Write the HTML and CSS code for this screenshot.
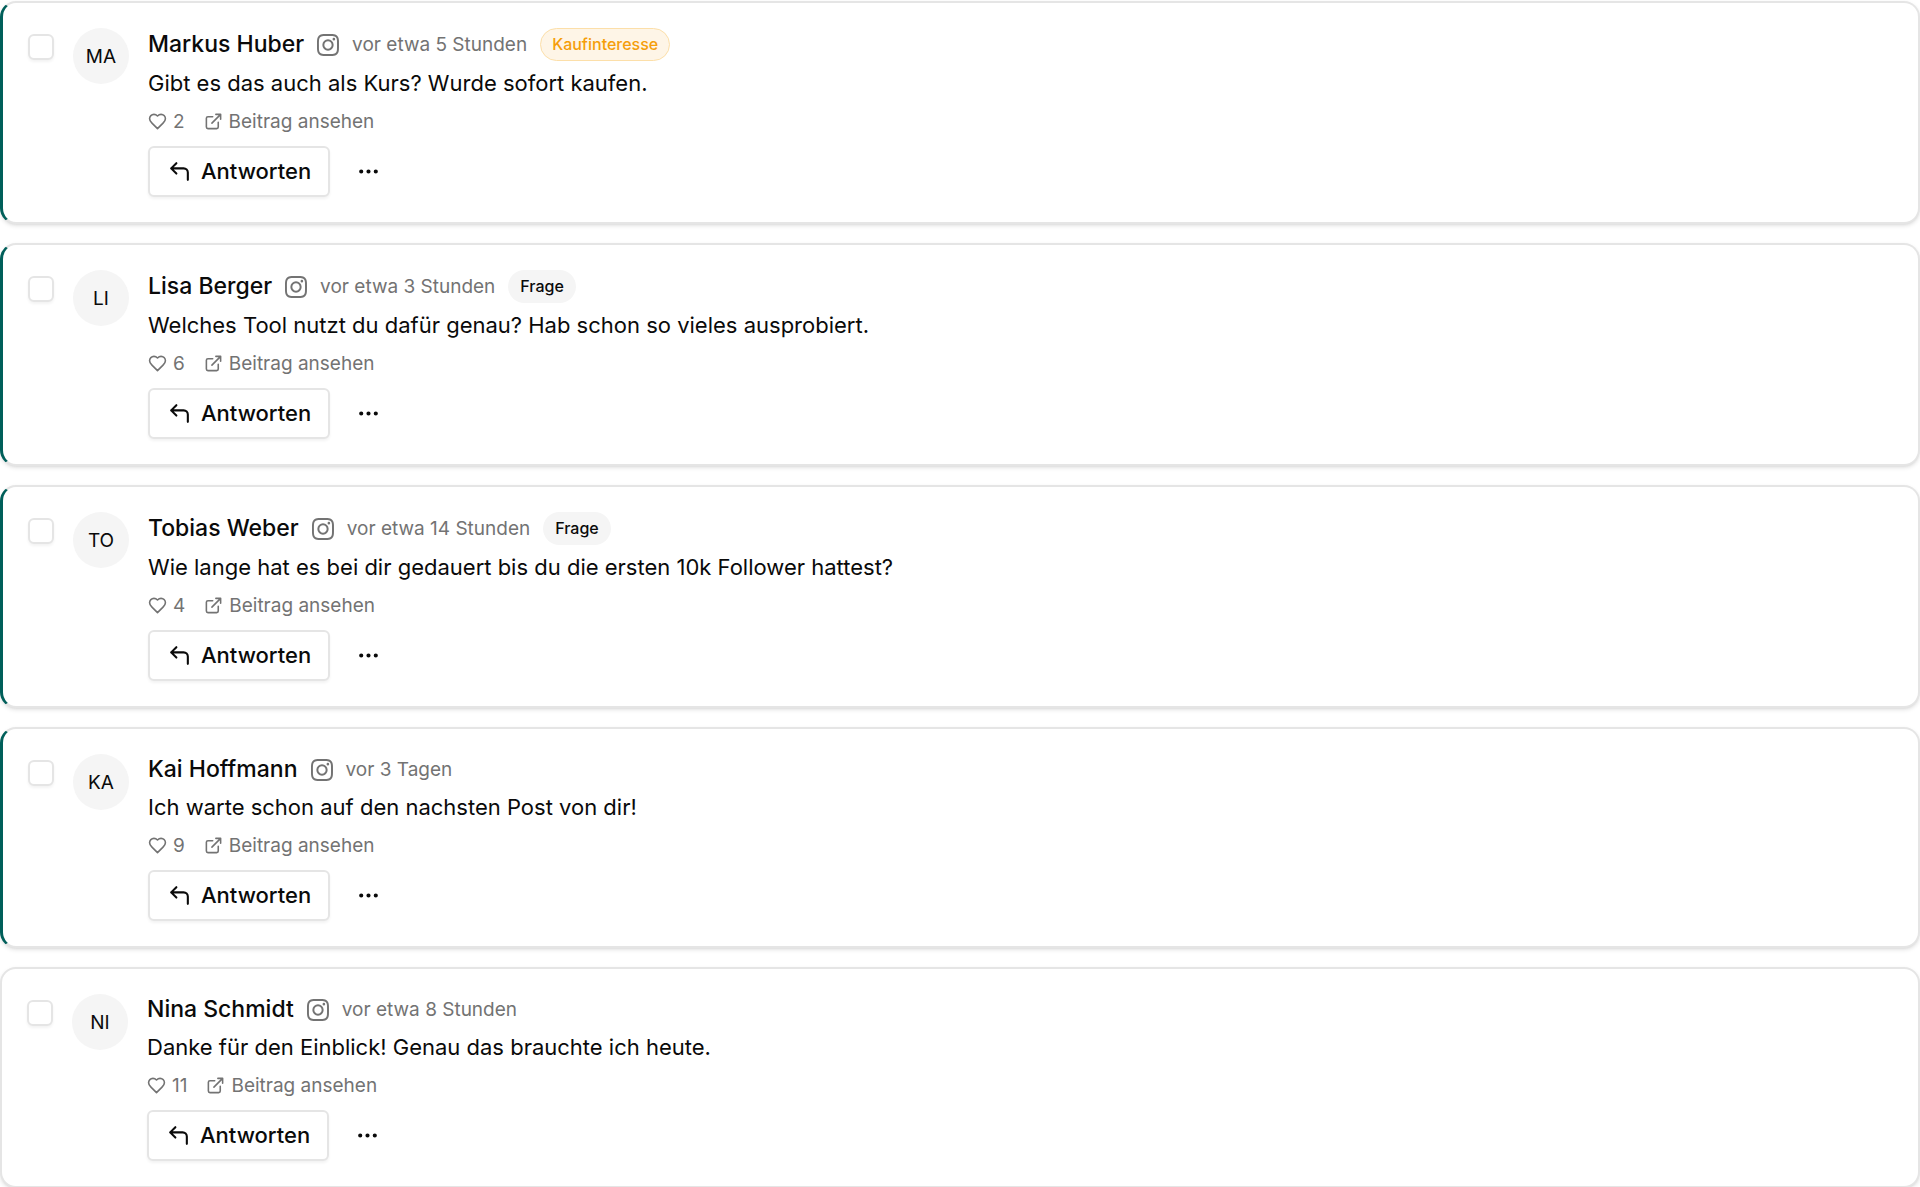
FILE: index.html
```html
<!DOCTYPE html>
<html lang="de">
<head>
<meta charset="utf-8">
<meta name="viewport" content="width=device-width, initial-scale=1">
<title>Kommentare</title>
<link rel="stylesheet" href="styles.css">
</head>
<body>
<svg class="sprite" aria-hidden="true">
  <symbol id="instagram" viewBox="0 0 24 24"><path fill="currentColor" d="M12 0C8.74 0 8.333.015 7.053.072 5.775.132 4.905.333 4.14.63c-.789.306-1.459.717-2.126 1.384S.935 3.35.63 4.14C.333 4.905.131 5.775.072 7.053.012 8.333 0 8.74 0 12s.015 3.667.072 4.947c.06 1.277.261 2.148.558 2.913.306.788.717 1.459 1.384 2.126.667.666 1.336 1.079 2.126 1.384.766.296 1.636.499 2.913.558C8.333 23.988 8.74 24 12 24s3.667-.015 4.947-.072c1.277-.06 2.148-.262 2.913-.558.788-.306 1.459-.718 2.126-1.384.666-.667 1.079-1.335 1.384-2.126.296-.765.499-1.636.558-2.913.06-1.28.072-1.687.072-4.947s-.015-3.667-.072-4.947c-.06-1.277-.262-2.149-.558-2.913-.306-.789-.718-1.459-1.384-2.126C21.319 1.347 20.651.935 19.86.63c-.765-.297-1.636-.499-2.913-.558C15.667.012 15.26 0 12 0zm0 2.16c3.203 0 3.585.016 4.85.071 1.17.055 1.805.249 2.227.415.562.217.96.477 1.382.896.419.42.679.819.896 1.381.164.422.36 1.057.413 2.227.057 1.266.07 1.646.07 4.85s-.015 3.585-.074 4.85c-.061 1.17-.256 1.805-.421 2.227-.224.562-.479.96-.899 1.382-.419.419-.824.679-1.38.896-.42.164-1.065.36-2.235.413-1.274.057-1.649.07-4.859.07-3.211 0-3.586-.015-4.859-.074-1.171-.061-1.816-.256-2.236-.421-.569-.224-.96-.479-1.379-.899-.421-.419-.69-.824-.9-1.38-.165-.42-.359-1.065-.42-2.235-.045-1.26-.061-1.649-.061-4.844 0-3.196.016-3.586.061-4.861.061-1.17.255-1.814.42-2.234.21-.57.479-.96.9-1.381.419-.419.81-.689 1.379-.898.42-.166 1.051-.361 2.221-.421 1.275-.045 1.65-.06 4.859-.06l.045.03zm0 3.678a6.162 6.162 0 1 0 0 12.324 6.162 6.162 0 1 0 0-12.324zM12 16c-2.21 0-4-1.79-4-4s1.79-4 4-4 4 1.79 4 4-1.79 4-4 4zm7.846-10.405a1.441 1.441 0 0 1-2.88 0 1.44 1.44 0 0 1 2.88 0z"/></symbol>
  <symbol id="heart" viewBox="0 0 24 24"><path class="stroke" d="M19 14c1.49-1.46 3-3.21 3-5.5A5.5 5.5 0 0 0 16.5 3c-1.76 0-3 .5-4.5 2-1.5-1.5-2.74-2-4.5-2A5.5 5.5 0 0 0 2 8.5c0 2.3 1.5 4.05 3 5.5l7 7Z"/></symbol>
  <symbol id="external" viewBox="0 0 24 24"><path class="stroke" d="M15 3h6v6M10 14 21 3M18 13v6a2 2 0 0 1-2 2H5a2 2 0 0 1-2-2V8a2 2 0 0 1 2-2h6"/></symbol>
  <symbol id="reply" viewBox="0 0 24 24"><path class="stroke" d="M9 14 4 9l5-5M20 20v-7a4 4 0 0 0-4-4H4"/></symbol>
  <symbol id="dots" viewBox="0 0 24 24"><g class="stroke"><circle cx="5" cy="12" r="1"/><circle cx="12" cy="12" r="1"/><circle cx="19" cy="12" r="1"/></g></symbol>
</svg>
<main class="list">
  <article class="card unread">
    <input class="check" type="checkbox" aria-label="Markus Huber auswählen">
    <div class="avatar">MA</div>
    <div class="body">
      <header class="head"><h2 class="name">Markus Huber</h2><svg class="brand"><use href="#instagram"/></svg><time class="time">vor etwa 5 Stunden</time><span class="badge intent">Kaufinteresse</span></header>
      <p class="text">Gibt es das auch als Kurs? Wurde sofort kaufen.</p>
      <div class="meta"><span class="item"><svg class="small"><use href="#heart"/></svg>2</span><a class="item" href="#"><svg class="small"><use href="#external"/></svg>Beitrag ansehen</a></div>
      <div class="actions"><button class="answer" type="button"><svg class="icon"><use href="#reply"/></svg>Antworten</button><button class="more" type="button" aria-label="Mehr"><svg class="icon"><use href="#dots"/></svg></button></div>
    </div>
  </article>
  <article class="card unread">
    <input class="check" type="checkbox" aria-label="Lisa Berger auswählen">
    <div class="avatar">LI</div>
    <div class="body">
      <header class="head"><h2 class="name">Lisa Berger</h2><svg class="brand"><use href="#instagram"/></svg><time class="time">vor etwa 3 Stunden</time><span class="badge">Frage</span></header>
      <p class="text">Welches Tool nutzt du dafür genau? Hab schon so vieles ausprobiert.</p>
      <div class="meta"><span class="item"><svg class="small"><use href="#heart"/></svg>6</span><a class="item" href="#"><svg class="small"><use href="#external"/></svg>Beitrag ansehen</a></div>
      <div class="actions"><button class="answer" type="button"><svg class="icon"><use href="#reply"/></svg>Antworten</button><button class="more" type="button" aria-label="Mehr"><svg class="icon"><use href="#dots"/></svg></button></div>
    </div>
  </article>
  <article class="card unread">
    <input class="check" type="checkbox" aria-label="Tobias Weber auswählen">
    <div class="avatar">TO</div>
    <div class="body">
      <header class="head"><h2 class="name">Tobias Weber</h2><svg class="brand"><use href="#instagram"/></svg><time class="time">vor etwa 14 Stunden</time><span class="badge">Frage</span></header>
      <p class="text">Wie lange hat es bei dir gedauert bis du die ersten 10k Follower hattest?</p>
      <div class="meta"><span class="item"><svg class="small"><use href="#heart"/></svg>4</span><a class="item" href="#"><svg class="small"><use href="#external"/></svg>Beitrag ansehen</a></div>
      <div class="actions"><button class="answer" type="button"><svg class="icon"><use href="#reply"/></svg>Antworten</button><button class="more" type="button" aria-label="Mehr"><svg class="icon"><use href="#dots"/></svg></button></div>
    </div>
  </article>
  <article class="card unread">
    <input class="check" type="checkbox" aria-label="Kai Hoffmann auswählen">
    <div class="avatar">KA</div>
    <div class="body">
      <header class="head"><h2 class="name">Kai Hoffmann</h2><svg class="brand"><use href="#instagram"/></svg><time class="time">vor 3 Tagen</time></header>
      <p class="text">Ich warte schon auf den nachsten Post von dir!</p>
      <div class="meta"><span class="item"><svg class="small"><use href="#heart"/></svg>9</span><a class="item" href="#"><svg class="small"><use href="#external"/></svg>Beitrag ansehen</a></div>
      <div class="actions"><button class="answer" type="button"><svg class="icon"><use href="#reply"/></svg>Antworten</button><button class="more" type="button" aria-label="Mehr"><svg class="icon"><use href="#dots"/></svg></button></div>
    </div>
  </article>
  <article class="card">
    <input class="check" type="checkbox" aria-label="Nina Schmidt auswählen">
    <div class="avatar">NI</div>
    <div class="body">
      <header class="head"><h2 class="name">Nina Schmidt</h2><svg class="brand"><use href="#instagram"/></svg><time class="time">vor etwa 8 Stunden</time></header>
      <p class="text">Danke für den Einblick! Genau das brauchte ich heute.</p>
      <div class="meta"><span class="item"><svg class="small"><use href="#heart"/></svg>11</span><a class="item" href="#"><svg class="small"><use href="#external"/></svg>Beitrag ansehen</a></div>
      <div class="actions"><button class="answer" type="button"><svg class="icon"><use href="#reply"/></svg>Antworten</button><button class="more" type="button" aria-label="Mehr"><svg class="icon"><use href="#dots"/></svg></button></div>
    </div>
  </article>
</main>
</body>
</html>
```
FILE: styles.css
```css
* { box-sizing: border-box; }
body {
  margin: 0;
  background: #fff;
  color: #0a0a0a;
  font: 400 22px/31px Inter, "Liberation Sans", sans-serif;
}
.sprite { position: absolute; width: 0; height: 0; }
.stroke { fill: none; stroke: currentColor; stroke-width: 2; stroke-linecap: round; stroke-linejoin: round; }
.list { display: flex; flex-direction: column; gap: 19px; padding-top: 1px; }
.card {
  display: flex;
  align-items: flex-start;
  gap: 19px;
  padding: 25px;
  border: 2px solid #e5e5e5;
  border-radius: 16px;
  background: #fff;
  box-shadow: 0 2px 4px rgb(0 0 0 / 10%), 0 2px 3px -2px rgb(0 0 0 / 10%);
}
.unread { border-left: 3px solid #005f5a; }
.check {
  appearance: none;
  flex: none;
  width: 26px;
  height: 26px;
  margin: 6px 0 0;
  border: 2px solid #e5e5e5;
  border-radius: 6px;
  background: #fff;
  box-shadow: 0 2px 3px rgb(0 0 0 / 5%);
}
.avatar {
  display: grid;
  place-items: center;
  flex: none;
  width: 56px;
  height: 56px;
  border-radius: 50%;
  background: #f5f5f5;
  font-size: 19px;
}
.body { flex: 1; min-width: 0; }
.head { display: flex; align-items: center; gap: 13px; }
.name { margin: 0; font-size: 23px; font-weight: 500; }
.brand { width: 22px; height: 22px; color: #737373; }
.time { color: #737373; font-size: 19px; }
.badge {
  padding: 3px 11px;
  border: 1px solid transparent;
  border-radius: 99px;
  background: #f5f5f5;
  font-size: 16px;
  font-weight: 500;
  line-height: 25px;
}
.intent { border-color: #fcdfa9; background: #fef5e7; color: #f59e0b; }
.text { margin: 6px 0 0; line-height: 33px; }
.meta { display: flex; gap: 19px; margin-top: 9px; color: #737373; font-size: 19px; line-height: 25px; }
.item { display: flex; align-items: center; gap: 6px; color: inherit; text-decoration: none; }
.small { width: 19px; height: 19px; }
.icon { width: 25px; height: 25px; }
.actions { display: flex; gap: 13px; margin-top: 12px; }
button {
  display: flex;
  align-items: center;
  justify-content: center;
  height: 51px;
  border: 0;
  border-radius: 6px;
  background: #fff;
  color: inherit;
  font: inherit;
  font-weight: 500;
}
.answer { gap: 9px; padding: 0 17px; border: 2px solid #e5e5e5; box-shadow: 0 2px 3px rgb(0 0 0 / 5%); }
.more { width: 51px; padding: 0; }
```
